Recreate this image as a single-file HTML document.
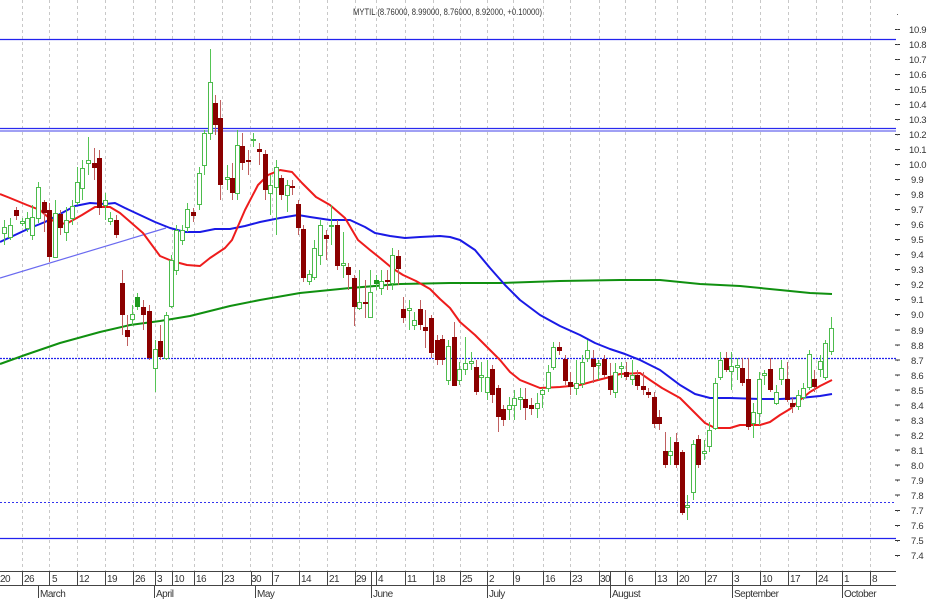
<!DOCTYPE html>
<html><head><meta charset="utf-8"><style>
html,body{margin:0;padding:0;background:#fff;}
svg{display:block;font-family:"Liberation Sans",Arial,sans-serif;}
</style></head><body>
<svg width="929" height="600" viewBox="0 0 929 600" xmlns="http://www.w3.org/2000/svg">
<rect width="929" height="600" fill="#fff"/>
<g stroke="#c8c8c8" stroke-width="1" stroke-dasharray="3,3">
<path d="M22.5 0V571M49.5 0V571M77.5 0V571M105.5 0V571M133.5 0V571M155.5 0V571M172.5 0V571M194.5 0V571M222.5 0V571M250.5 0V571M272.5 0V571M299.5 0V571M327.5 0V571M355.5 0V571M376.5 0V571M405.5 0V571M433.5 0V571M460.5 0V571M487.5 0V571M513.5 0V571M543.5 0V571M570.5 0V571M599.5 0V571M625.5 0V571M655.5 0V571M677.5 0V571M705.5 0V571M732.5 0V571M760.5 0V571M788.5 0V571M816.5 0V571M842.5 0V571M870.5 0V571"/>
</g>
<text x="353" y="15" font-size="9.5" fill="#333" textLength="189" lengthAdjust="spacingAndGlyphs">MYTIL (8.76000, 8.99000, 8.76000, 8.92000, +0.10000)</text>
<g fill="none">
<path d="M0 39.5H896" stroke="#2222ee" stroke-width="1.2"/>
<path d="M0 128.5H896" stroke="#2a2aee" stroke-width="1.2"/>
<path d="M0 131H896" stroke="#8080f0" stroke-width="1.5"/>
<path d="M0 358.5H896" stroke="#2222ee" stroke-width="1.3" stroke-dasharray="2,1"/>
<path d="M0 502.5H896" stroke="#3333ee" stroke-width="1" stroke-dasharray="2,2"/>
<path d="M0 538.5H896" stroke="#2222ee" stroke-width="1.2"/>
<path d="M0 278L166 228" stroke="#6a6af0" stroke-width="1.2"/>
</g>
<g fill="none" stroke-width="2" stroke-linejoin="round">
<polyline stroke="#109010" points="0,364 25,355 60,343 100,332 130,325 160,321 190,316 210,311 230,306 260,300 300,293 350,288 400,284 450,283 500,283 560,281 620,280 660,280 700,284 740,286 780,290 810,293 832,294"/>
<polyline stroke="#1a1ae6" points="0,242 15,235 30,228 45,222 60,214 75,206 90,203 105,204 115,203 125,208 140,215 155,222 170,228 185,232 200,232 215,229 230,229 245,226 260,222 280,218 298,215 310,217 330,220 350,220 365,227 375,233 390,236 405,238 420,237 440,236 450,237 460,240 475,250 490,268 505,285 520,300 540,315 560,326 580,335 595,343 610,349 625,354 640,360 660,370 680,385 695,394 710,398 730,398 760,399 780,399 800,398 820,396 832,394"/>
<polyline stroke="#ee1c1c" points="0,194 10,198 27,205 40,210 49,218 55,222 66,224 82,215 95,207 110,207 120,213 143,233 160,256 172,261 187,265 200,266 210,258 225,248 232,240 245,210 258,185 268,175 280,170 292,172 302,183 316,197 330,205 345,218 358,240 370,250 380,258 392,268 403,275 416,281 430,289 440,299 450,308 460,322 475,335 490,350 500,360 510,372 520,380 540,388 560,387 580,385 598,380 610,377 620,374 640,373 650,380 662,388 680,398 695,413 705,423 715,428 730,428 740,425 760,425 770,422 780,415 790,409 800,400 810,392 820,386 832,380"/>
</g>
<path fill="none" stroke="#55c455" stroke-width="1" d="M4.5 220V245M10.5 218V240M22.5 218V226M27.5 212V232M32.5 205V240M38.5 182V223M55.5 200V257M66.5 207V241M72.5 200V225M77.5 167V205M82.5 160V200M88.5 137V175M105.5 193V220M110.5 212V225M132.5 305V325M137.5 293V310M155.5 340V392M166.5 312V360M171.5 255V308M176.5 225V275M182.5 225V245M187.5 203V232M199.5 167V210M204.5 130V175M210.5 49V140M227.5 165V190M237.5 130V200M253.5 133V147M270.5 175V215M276.5 160V235M287.5 180V212M309.5 270V285M314.5 240V280M320.5 220V265M331.5 205V245M343.5 232V278M359.5 270V310M370.5 270V318M376.5 275V290M381.5 270V295M392.5 248V290M409.5 300V330M414.5 312V330M448.5 340V385M459.5 362V385M465.5 337V375M471.5 352V370M481.5 362V392M487.5 360V400M509.5 397V420M514.5 390V420M520.5 388V410M537.5 393V418M542.5 388V408M548.5 365V392M553.5 342V370M576.5 360V395M582.5 355V388M587.5 340V362M598.5 360V380M615.5 363V398M621.5 362V378M632.5 360V385M670.5 437V465M687.5 495V520M693.5 440V500M704.5 440V460M709.5 422V452M715.5 378V430M720.5 352V380M731.5 352V390M737.5 358V380M753.5 403V438M759.5 372V425M764.5 370V385M776.5 385V405M781.5 360V385M798.5 390V410M803.5 383V400M809.5 350V390M820.5 355V377M825.5 340V380M831.5 317V355"/>
<path fill="none" stroke="#c06060" stroke-width="1" d="M16.5 207V220M44.5 200V232M49.5 203V262M60.5 210V235M94.5 148V180M99.5 150V215M116.5 215V238M122.5 270V335M127.5 315V346M143.5 300V330M149.5 305V360M160.5 325V360M193.5 208V222M215.5 95V135M220.5 100V200M232.5 163V200M242.5 133V170M248.5 150V175M259.5 143V165M265.5 150V200M281.5 175V200M292.5 180V195M298.5 200V235M303.5 225V282M326.5 230V260M337.5 220V270M348.5 263V290M354.5 275V326M365.5 280V318M387.5 270V290M398.5 250V285M403.5 297V323M420.5 300V330M425.5 310V348M431.5 315V358M437.5 335V365M442.5 335V365M454.5 322V386M476.5 360V395M492.5 365V403M498.5 385V432M503.5 405V426M525.5 388V420M531.5 398V415M559.5 342V355M565.5 355V385M570.5 372V395M593.5 350V383M604.5 355V378M610.5 363V395M626.5 362V380M637.5 370V390M643.5 372V395M648.5 388V398M654.5 392V428M659.5 410V430M665.5 432V468M676.5 433V468M682.5 450V515M698.5 435V468M726.5 352V372M742.5 358V386M748.5 358V430M770.5 358V392M787.5 362V402M792.5 398V413M814.5 370V392"/>
<g fill="#fff" stroke="#4cbb4c" stroke-width="1">
<rect x="2.5" y="227.5" width="4" height="6"/><rect x="8.5" y="225.5" width="4" height="12"/><rect x="20.5" y="221.5" width="4" height="2"/><rect x="25.5" y="218.5" width="4" height="10"/><rect x="30.5" y="217.5" width="4" height="18"/><rect x="36.5" y="187.5" width="4" height="31"/><rect x="53.5" y="213.5" width="4" height="44"/><rect x="64.5" y="220.5" width="4" height="12"/><rect x="70.5" y="206.5" width="4" height="12"/><rect x="75.5" y="182.5" width="4" height="20"/><rect x="80.5" y="168.5" width="4" height="20"/><rect x="86.5" y="160.5" width="4" height="3"/><rect x="103.5" y="200.5" width="4" height="5"/><rect x="108.5" y="218.5" width="4" height="3"/><rect x="130.5" y="314.5" width="4" height="5"/><rect x="153.5" y="349.5" width="4" height="19"/><rect x="164.5" y="315.5" width="4" height="43"/><rect x="169.5" y="260.5" width="4" height="46"/><rect x="174.5" y="230.5" width="4" height="40"/><rect x="180.5" y="230.5" width="4" height="10"/><rect x="185.5" y="209.5" width="4" height="18"/><rect x="197.5" y="173.5" width="4" height="31"/><rect x="202.5" y="133.5" width="4" height="32"/><rect x="208.5" y="82.5" width="4" height="51"/><rect x="225.5" y="177.5" width="4" height="2"/><rect x="235.5" y="145.5" width="4" height="48"/><rect x="251.5" y="139.5" width="4" height="1"/><rect x="268.5" y="185.5" width="4" height="8"/><rect x="274.5" y="167.5" width="4" height="20"/><rect x="285.5" y="185.5" width="4" height="10"/><rect x="307.5" y="274.5" width="4" height="7"/><rect x="312.5" y="248.5" width="4" height="29"/><rect x="318.5" y="225.5" width="4" height="30"/><rect x="329.5" y="225.5" width="4" height="1"/><rect x="341.5" y="263.5" width="4" height="2"/><rect x="357.5" y="302.5" width="4" height="6"/><rect x="368.5" y="292.5" width="4" height="25"/><rect x="379.5" y="281.5" width="4" height="7"/><rect x="390.5" y="255.5" width="4" height="28"/><rect x="407.5" y="308.5" width="4" height="2"/><rect x="412.5" y="320.5" width="4" height="5"/><rect x="446.5" y="346.5" width="4" height="34"/><rect x="457.5" y="369.5" width="4" height="11"/><rect x="463.5" y="363.5" width="4" height="6"/><rect x="469.5" y="361.5" width="4" height="2"/><rect x="479.5" y="375.5" width="4" height="2"/><rect x="485.5" y="377.5" width="4" height="15"/><rect x="507.5" y="405.5" width="4" height="4"/><rect x="512.5" y="398.5" width="4" height="7"/><rect x="518.5" y="397.5" width="4" height="2"/><rect x="535.5" y="403.5" width="4" height="5"/><rect x="540.5" y="390.5" width="4" height="4"/><rect x="546.5" y="372.5" width="4" height="16"/><rect x="551.5" y="347.5" width="4" height="20"/><rect x="574.5" y="383.5" width="4" height="5"/><rect x="580.5" y="362.5" width="4" height="21"/><rect x="585.5" y="350.5" width="4" height="8"/><rect x="596.5" y="363.5" width="4" height="2"/><rect x="613.5" y="372.5" width="4" height="20"/><rect x="619.5" y="366.5" width="4" height="2"/><rect x="630.5" y="375.5" width="4" height="4"/><rect x="668.5" y="451.5" width="4" height="4"/><rect x="685.5" y="505.5" width="4" height="2"/><rect x="691.5" y="444.5" width="4" height="48"/><rect x="702.5" y="451.5" width="4" height="2"/><rect x="707.5" y="430.5" width="4" height="16"/><rect x="713.5" y="383.5" width="4" height="45"/><rect x="718.5" y="360.5" width="4" height="17"/><rect x="729.5" y="366.5" width="4" height="5"/><rect x="735.5" y="365.5" width="4" height="2"/><rect x="751.5" y="412.5" width="4" height="11"/><rect x="757.5" y="379.5" width="4" height="34"/><rect x="762.5" y="373.5" width="4" height="2"/><rect x="774.5" y="392.5" width="4" height="11"/><rect x="779.5" y="368.5" width="4" height="11"/><rect x="796.5" y="395.5" width="4" height="11"/><rect x="801.5" y="388.5" width="4" height="9"/><rect x="807.5" y="354.5" width="4" height="33"/><rect x="818.5" y="361.5" width="4" height="8"/><rect x="823.5" y="343.5" width="4" height="34"/><rect x="829.5" y="328.5" width="4" height="23"/>
</g>
<g fill="#1d9a1d"><rect x="135" y="297" width="5" height="10"/><rect x="374" y="280" width="5" height="4"/></g>
<g fill="#8b0000">
<rect x="14" y="210" width="5" height="6"/><rect x="42" y="202" width="5" height="11"/><rect x="47" y="210" width="5" height="47"/><rect x="58" y="214" width="5" height="14"/><rect x="92" y="163" width="5" height="5"/><rect x="97" y="158" width="5" height="50"/><rect x="114" y="220" width="5" height="15"/><rect x="120" y="283" width="5" height="32"/><rect x="125" y="330" width="5" height="7"/><rect x="141" y="307" width="5" height="8"/><rect x="147" y="311" width="5" height="47"/><rect x="158" y="341" width="5" height="16"/><rect x="191" y="212" width="5" height="4"/><rect x="213" y="103" width="5" height="22"/><rect x="218" y="118" width="5" height="67"/><rect x="230" y="178" width="5" height="15"/><rect x="240" y="146" width="5" height="17"/><rect x="246" y="160" width="5" height="2"/><rect x="257" y="149" width="5" height="3"/><rect x="263" y="154" width="5" height="36"/><rect x="279" y="178" width="5" height="17"/><rect x="290" y="186" width="5" height="2"/><rect x="296" y="204" width="5" height="24"/><rect x="301" y="229" width="5" height="49"/><rect x="324" y="235" width="5" height="4"/><rect x="335" y="225" width="5" height="41"/><rect x="346" y="267" width="5" height="8"/><rect x="352" y="278" width="5" height="29"/><rect x="363" y="302" width="5" height="2"/><rect x="385" y="280" width="5" height="2"/><rect x="396" y="256" width="5" height="13"/><rect x="401" y="309" width="5" height="9"/><rect x="418" y="309" width="5" height="16"/><rect x="423" y="327" width="5" height="4"/><rect x="429" y="318" width="5" height="35"/><rect x="435" y="340" width="5" height="20"/><rect x="440" y="339" width="5" height="21"/><rect x="452" y="337" width="5" height="49"/><rect x="474" y="367" width="5" height="25"/><rect x="490" y="369" width="5" height="26"/><rect x="496" y="388" width="5" height="29"/><rect x="501" y="409" width="5" height="11"/><rect x="523" y="399" width="5" height="9"/><rect x="529" y="405" width="5" height="4"/><rect x="557" y="347" width="5" height="4"/><rect x="563" y="359" width="5" height="22"/><rect x="568" y="382" width="5" height="5"/><rect x="591" y="359" width="5" height="8"/><rect x="602" y="359" width="5" height="16"/><rect x="608" y="376" width="5" height="14"/><rect x="624" y="372" width="5" height="5"/><rect x="635" y="375" width="5" height="11"/><rect x="641" y="386" width="5" height="4"/><rect x="646" y="392" width="5" height="3"/><rect x="652" y="397" width="5" height="27"/><rect x="657" y="417" width="5" height="7"/><rect x="663" y="451" width="5" height="14"/><rect x="674" y="442" width="5" height="23"/><rect x="680" y="452" width="5" height="61"/><rect x="696" y="439" width="5" height="26"/><rect x="724" y="358" width="5" height="12"/><rect x="740" y="368" width="5" height="15"/><rect x="746" y="379" width="5" height="48"/><rect x="768" y="369" width="5" height="21"/><rect x="785" y="379" width="5" height="21"/><rect x="790" y="403" width="5" height="4"/><rect x="812" y="379" width="5" height="8"/>
</g>
<path stroke="#333" stroke-width="1" d="M895 29.5h5M895 44.5h5M895 59.5h5M895 74.5h5M895 89.5h5M895 104.5h5M895 119.5h5M895 134.5h5M895 149.5h5M895 164.5h5M895 179.5h5M895 194.5h5M895 209.5h5M895 224.5h5M895 239.5h5M895 254.5h5M895 269.5h5M895 284.5h5M895 299.5h5M895 314.5h5M895 330h5M895 345h5M895 360h5M895 375h5M895 390h5M895 405h5M895 420h5M895 435h5M895 450h5M895 465h5M895 480h5M895 495h5M895 510.5h5M895 525.5h5M895 540.5h5M895 555.5h5"/>
<path stroke="#666" stroke-width="1" stroke-dasharray="1,14.05" d="M897.5 14V565"/>
<g font-size="9.5" fill="#333" letter-spacing="-0.3">
<text x="909" y="33">10.9</text><text x="909" y="48">10.8</text><text x="909" y="63">10.7</text><text x="909" y="78">10.6</text><text x="909" y="93">10.5</text><text x="909" y="108">10.4</text><text x="909" y="123">10.3</text><text x="909" y="138">10.2</text><text x="909" y="153">10.1</text><text x="909" y="168">10.0</text><text x="911" y="183">9.9</text><text x="911" y="198">9.8</text><text x="911" y="213">9.7</text><text x="911" y="228">9.6</text><text x="911" y="243">9.5</text><text x="911" y="258">9.4</text><text x="911" y="273">9.3</text><text x="911" y="288">9.2</text><text x="911" y="303">9.1</text><text x="911" y="318">9.0</text><text x="911" y="334">8.9</text><text x="911" y="349">8.8</text><text x="911" y="364">8.7</text><text x="911" y="379">8.6</text><text x="911" y="394">8.5</text><text x="911" y="409">8.4</text><text x="911" y="424">8.3</text><text x="911" y="439">8.2</text><text x="911" y="454">8.1</text><text x="911" y="469">8.0</text><text x="911" y="484">7.9</text><text x="911" y="499">7.8</text><text x="911" y="514">7.7</text><text x="911" y="529">7.6</text><text x="911" y="544">7.5</text><text x="911" y="559">7.4</text>
</g>
<path stroke="#444" stroke-width="1" fill="none" d="M0 571.5H896M0 585.5H896"/>
<path stroke="#444" stroke-width="1" d="M22.5 571V586M49.5 571V586M77.5 571V586M105.5 571V586M133.5 571V586M155.5 571V586M172.5 571V586M194.5 571V586M222.5 571V586M251.5 571V586M272.5 571V586M299.5 571V586M327.5 571V586M355.5 571V586M371.5 571V586M376.5 571V586M405.5 571V586M433.5 571V586M460.5 571V586M487.5 571V586M513.5 571V586M543.5 571V586M570.5 571V586M599.5 571V586M610.5 571V586M625.5 571V586M655.5 571V586M677.5 571V586M705.5 571V586M732.5 571V586M760.5 571V586M788.5 571V586M816.5 571V586M842.5 571V586M870.5 571V586M38.5 586V598M154.5 586V598M255.5 586V598M371.5 586V598M487.5 586V598M610.5 586V598M732.5 586V598M842.5 586V598"/>
<g font-size="10" fill="#333" letter-spacing="-0.5">
<text x="0" y="582">20</text><text x="24" y="582">26</text><text x="52" y="582">5</text><text x="79" y="582">12</text><text x="107" y="582">19</text><text x="135" y="582">26</text><text x="157" y="582">3</text><text x="174" y="582">10</text><text x="196" y="582">16</text><text x="224" y="582">23</text><text x="251" y="582">30</text><text x="274" y="582">7</text><text x="301" y="582">14</text><text x="329" y="582">21</text><text x="356" y="582">29</text><text x="378" y="582">4</text><text x="407" y="582">11</text><text x="435" y="582">18</text><text x="462" y="582">25</text><text x="489" y="582">2</text><text x="515" y="582">9</text><text x="545" y="582">16</text><text x="572" y="582">23</text><text x="600" y="582">30</text><text x="628" y="582">6</text><text x="657" y="582">13</text><text x="679" y="582">20</text><text x="707" y="582">27</text><text x="734" y="582">3</text><text x="762" y="582">10</text><text x="790" y="582">17</text><text x="818" y="582">24</text><text x="844" y="582">1</text><text x="872" y="582">8</text>
<text x="40" y="597">March</text><text x="156" y="597">April</text><text x="257" y="597">May</text><text x="373" y="597">June</text><text x="489" y="597">July</text><text x="612" y="597">August</text><text x="734" y="597">September</text><text x="844" y="597">October</text>
</g>
</svg>
</body></html>
